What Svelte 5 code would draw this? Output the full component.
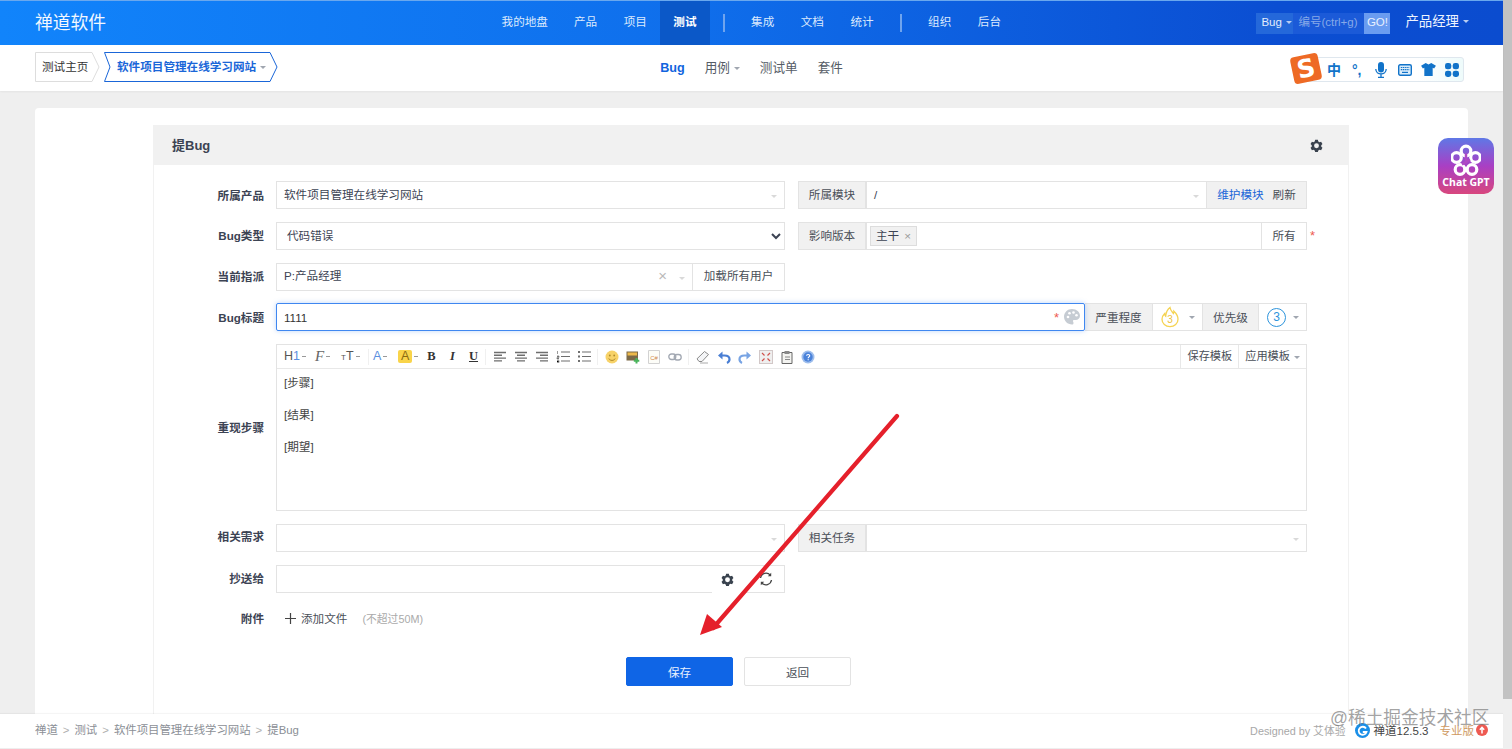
<script>
  const leftNav = ['我的地盘', '产品', '项目']
  const midNav = ['集成', '文档', '统计']
  const rightNav = ['组织', '后台']
  const crumbs = ['禅道', '测试', '软件项目管理在线学习网站', '提Bug']
</script>

{#snippet gear(size)}
  <svg class="gear" width={size} height={size} viewBox="0 0 24 24">
    <path fill="#39424e" fill-rule="evenodd" d="M9.500 1.500h5l.8 3 2.200 1.300 3-.8 2.500 4.300-2.200 2.200v2.600l2.200 2.200-2.500 4.300-3-.8-2.200 1.300-.8 3h-5l-.8-3-2.200-1.300-3 .8L1 16.300l2.200-2.200v-2.600L1 9.300 3.500 5l3 .8 2.200-1.300zM12 8a4.500 4.500 0 1 0 0 9 4.500 4.500 0 0 0 0-9z"/>
  </svg>
{/snippet}

<div class="window">
  <div class="page">
    <header class="topbar">
      <div class="logo">禅道软件</div>
      <nav class="mainnav">
        {#each leftNav as item}<a class="navitem">{item}</a>{/each}
        <a class="navitem active">测试</a>
        <i class="navsep"></i>
        {#each midNav as item}<a class="navitem">{item}</a>{/each}
        <i class="navsep"></i>
        {#each rightNav as item}<a class="navitem">{item}</a>{/each}
      </nav>
      <div class="topright">
        <div class="search">
          <span class="search-type">Bug<i class="caret light"></i></span>
          <span class="search-input">编号(ctrl+g)</span>
          <span class="search-go">GO!</span>
        </div>
        <span class="user">产品经理<i class="caret light"></i></span>
      </div>
    </header>

    <div class="subbar">
      <div class="crumbs">
        <div class="crumb home">
          <svg class="crumb-bg" width="65" height="30" viewBox="0 0 65 30"><path d="M.5.5H57L64 15l-7 14.500H.5z" fill="#fff" stroke="#ddd"/></svg>
          <span>测试主页</span>
        </div>
        <div class="crumb current">
          <svg class="crumb-bg" width="174" height="30" viewBox="0 0 174 30"><path d="M.5.5H166L173 15l-7 14.500H.5L6 15z" fill="#fff" stroke="#1a66d8"/></svg>
          <span>软件项目管理在线学习网站<i class="caret"></i></span>
        </div>
      </div>
      <nav class="subnav">
        <a class="subitem on">Bug</a>
        <a class="subitem">用例<i class="caret"></i></a>
        <a class="subitem">测试单</a>
        <a class="subitem">套件</a>
      </nav>
    </div>

    <main class="main">
      <section class="card">
        <div class="panel">
          <div class="panel-head">
            <h2>提Bug</h2>
            {@render gear(13)}
          </div>
          <form class="form">
            <div class="row first">
              <label>所属产品</label>
              <div class="cols">
                <div class="group">
                  <div class="input grow">软件项目管理在线学习网站<i class="caret faint"></i></div>
                </div>
                <div class="group">
                  <span class="addon w68">所属模块</span>
                  <div class="input grow">/<i class="caret faint"></i></div>
                  <span class="addon maintain"><a>维护模块</a><b>刷新</b></span>
                </div>
              </div>
            </div>

            <div class="row">
              <label>Bug类型</label>
              <div class="cols">
                <select class="native"><option>代码错误</option></select>
                <div class="group">
                  <span class="addon w68">影响版本</span>
                  <div class="input grow chips"><span class="chip">主干<em>×</em></span></div>
                  <span class="addon white w45">所有</span>
                  <span class="star outside">*</span>
                </div>
              </div>
            </div>

            <div class="row">
              <label>当前指派</label>
              <div class="cols">
                <div class="group tight-line">
                  <div class="input grow">P:产品经理<span class="clear">×</span><i class="caret faint"></i></div>
                  <span class="addon white w92">加载所有用户</span>
                </div>
              </div>
            </div>

            <div class="row title-row">
              <label>Bug标题</label>
              <div class="group">
                <div class="input grow focus">
                  <span class="titletext">1111</span>
                  <span class="star">*</span>
                  <svg class="palette" width="18" height="18" viewBox="0 0 18 18">
                    <path fill="#c6ccd3" fill-rule="evenodd" d="M9 1c4.600 0 8 3 8 6.800 0 2.700-2 4.200-4.300 4.200h-1.500c-.8 0-1.300.5-1.300 1.100 0 .7.600 1 .6 1.800 0 .9-.6 1.600-1.500 1.600C4.600 16.500 1 13.100 1 8.800 1 4.500 4.500 1 9 1z"/>
                    <circle cx="5" cy="9" r="1.300" fill="#fff"/><circle cx="6.500" cy="5.300" r="1.300" fill="#fff"/><circle cx="10.500" cy="4.500" r="1.300" fill="#fff"/><circle cx="13.500" cy="7.300" r="1.300" fill="#fff"/>
                  </svg>
                </div>
                <span class="addon w68">严重程度</span>
                <span class="picker w50">
                  <svg width="20" height="22" viewBox="0 0 20 22">
                    <path fill="none" stroke="#f5d352" stroke-width="1.300" d="M10 1.500c.6 3.300 2.200 4.200 3.500 6 .4-.8.500-1.500.4-2.300 2.500 2.300 4.100 5 4.100 8 0 4.400-3.500 7.500-8 7.500s-8-3.100-8-7.500c0-2.600 1.300-4.300 2.700-5.700 0 1.200.3 2 1 2.700C6.100 6.500 7.500 3.300 10 1.500z"/>
                    <text x="10" y="17" text-anchor="middle" class="fire-num">3</text>
                  </svg>
                  <i class="caret"></i>
                </span>
                <span class="addon w56">优先级</span>
                <span class="picker w48">
                  <span class="pri">3</span>
                  <i class="caret"></i>
                </span>
              </div>
            </div>

            <div class="row editor-row">
              <label>重现步骤</label>
              <div class="editor">
                <div class="toolbar">
                  <span class="tool h1">H<span class="blue">1</span><i class="mini"></i></span>
                  <span class="tool ff"><span class="scriptf">F</span><i class="mini"></i></span>
                  <span class="tool tt"><small>T</small>T<i class="mini"></i></span>
                  <i class="tsep"></i>
                  <span class="tool mid"><span class="blue">A</span><i class="mini"></i></span>
                  <span class="tool mid second"><span class="hl">A</span><i class="mini"></i></span>
                  <span class="tool fmt bold">B</span>
                  <span class="tool fmt ital">I</span>
                  <span class="tool fmt under">U</span>
                  <i class="tsep tight"></i>
                  <span class="tool">
                    <svg width="14" height="12" viewBox="0 0 14 12"><path stroke="#6e6e6e" stroke-width="1.400" d="M1 1.500h12M1 4.300h8M1 7.100h12M1 9.900h8"/></svg>
                  </span>
                  <span class="tool">
                    <svg width="14" height="12" viewBox="0 0 14 12"><path stroke="#6e6e6e" stroke-width="1.400" d="M1 1.500h12M3 4.300h8M1 7.100h12M3 9.900h8"/></svg>
                  </span>
                  <span class="tool">
                    <svg width="14" height="12" viewBox="0 0 14 12"><path stroke="#6e6e6e" stroke-width="1.400" d="M1 1.500h12M5 4.300h8M1 7.100h12M5 9.900h8"/></svg>
                  </span>
                  <span class="tool">
                    <svg width="14" height="13" viewBox="0 0 14 13"><path stroke="#6e6e6e" stroke-width="1.200" d="M5 2h9M5 6.500h9M5 11h9"/><path stroke="#999" d="M1.500 1v3M1 6h2v1.500H1V9h2M1 10.500h2V12.500H1"/></svg>
                  </span>
                  <span class="tool">
                    <svg width="14" height="13" viewBox="0 0 14 13"><path stroke="#6e6e6e" stroke-width="1.200" d="M5 2h9M5 6.500h9M5 11h9"/><path fill="#6e6e6e" d="M1 1h2v2H1zM1 5.500h2v2H1zM1 10h2v2H1z"/></svg>
                  </span>
                  <i class="tsep"></i>
                  <span class="tool">
                    <svg width="14" height="14" viewBox="0 0 14 14"><circle cx="7" cy="7" r="6.500" fill="#f7d268"/><circle cx="4.800" cy="5.500" r=".9" fill="#b08a2a"/><circle cx="9.200" cy="5.500" r=".9" fill="#b08a2a"/><path d="M3.800 8.500c1 2.500 5.400 2.500 6.400 0" stroke="#b08a2a" fill="none"/></svg>
                  </span>
                  <span class="tool">
                    <svg width="14" height="14" viewBox="0 0 14 14"><rect x=".5" y="1.500" width="11.500" height="9" fill="#7c6a48"/><rect x="1.500" y="2.500" width="9.500" height="3" fill="#eeb94a"/><path d="M10.500 8v5.500M7.800 10.800h5.500" stroke="#4ab45c" stroke-width="2"/></svg>
                  </span>
                  <span class="tool">
                    <svg width="14" height="14" viewBox="0 0 14 14"><path d="M1.500.5h11v13h-11z" fill="#fdfdf8" stroke="#d2d2d2"/><text x="7" y="9.500" text-anchor="middle" class="codeglyph">C#</text></svg>
                  </span>
                  <span class="tool">
                    <svg width="14" height="10" viewBox="0 0 14 10"><rect x=".8" y="2" width="7" height="5.500" rx="2.700" fill="none" stroke="#a2a8b2" stroke-width="1.300"/><rect x="6.200" y="2.500" width="7" height="5.500" rx="2.700" fill="none" stroke="#a2a8b2" stroke-width="1.300"/></svg>
                  </span>
                  <i class="tsep"></i>
                  <span class="tool">
                    <svg width="14" height="14" viewBox="0 0 14 14"><path d="M8.500 1.500l4 3-6.500 7H3L1 8.800z" fill="#f4f5f7" stroke="#8a8a8a"/><path d="M4 13h8" stroke="#aaa"/></svg>
                  </span>
                  <span class="tool">
                    <svg width="14" height="14" viewBox="0 0 14 14"><path d="M4 5.500h3.500c3.500 0 5 1.800 5 3.800 0 1.600-1 3-2.500 3.700" fill="none" stroke="#4a7fd4" stroke-width="2.200"/><path d="M5.500 1.500v8L1 5.500z" fill="#4a7fd4"/></svg>
                  </span>
                  <span class="tool">
                    <svg width="14" height="14" viewBox="0 0 14 14"><path d="M10 5.500H6.500c-3.500 0-5 1.800-5 3.800 0 1.600 1 3 2.500 3.700" fill="none" stroke="#78a4e4" stroke-width="2.200"/><path d="M8.500 1.500v8L13 5.500z" fill="#78a4e4"/></svg>
                  </span>
                  <span class="tool">
                    <svg width="14" height="14" viewBox="0 0 14 14"><rect x=".5" y=".5" width="13" height="13" fill="#efefef" stroke="#d2c8c8"/><path d="M3 3l2.500 2.500M11 3L8.500 5.500M3 11l2.500-2.500M11 11L8.500 8.500" stroke="#d0504a" stroke-width="1.200"/></svg>
                  </span>
                  <span class="tool">
                    <svg width="14" height="14" viewBox="0 0 14 14"><path d="M2 2.500h10v11H2z" fill="#f3f3f0" stroke="#666"/><path d="M4.500 1h5v3h-5z" fill="#888"/><path d="M5 7h5M5 9.500h5" stroke="#888"/></svg>
                  </span>
                  <span class="tool">
                    <svg width="14" height="14" viewBox="0 0 14 14"><circle cx="7" cy="7" r="6.500" fill="#9dbdec"/><circle cx="7" cy="7" r="4.700" fill="#4a82da"/><path d="M5.500 5.600c.3-1.500 3.200-1.500 3.200.2 0 1.100-1.500 1.100-1.500 2.400M7.200 9.300v1" stroke="#fff" fill="none" stroke-width="1.200"/></svg>
                  </span>
                  <div class="tpl">
                    <span class="tplbtn">保存模板</span>
                    <span class="tplbtn">应用模板<i class="caret"></i></span>
                  </div>
                </div>
                <div class="editbody">
                  <p>[步骤]</p>
                  <p>[结果]</p>
                  <p>[期望]</p>
                </div>
              </div>
            </div>

            <div class="row">
              <label class="raised">相关需求</label>
              <div class="cols">
                <div class="group"><div class="input grow"><i class="caret faint"></i></div></div>
                <div class="group">
                  <span class="addon w68">相关任务</span>
                  <div class="input grow"><i class="caret faint"></i></div>
                </div>
              </div>
            </div>

            <div class="row">
              <label>抄送给</label>
              <div class="cols">
                <div class="group">
                  <div class="input grow noright"></div>
                  <span class="iconbtn">{@render gear(13)}</span>
                  <span class="iconbtn refresh">
                    <svg width="16" height="16" viewBox="0 0 16 16"><path d="M2.500 7a5.600 5.600 0 0 1 9.800-2.800M13.500 9a5.600 5.600 0 0 1-9.800 2.800" fill="none" stroke="#444" stroke-width="1.300"/><path d="M13.200 1.800v3.400H9.800zM2.800 14.200v-3.400h3.400z" fill="#444"/></svg>
                  </span>
                </div>
              </div>
            </div>

            <div class="row attach">
              <label>附件</label>
              <div class="attach-line">
                <svg width="11" height="11" viewBox="0 0 11 11"><path d="M5.500 0v11M0 5.500h11" stroke="#444" stroke-width="1.200"/></svg>
                <span>添加文件</span>
                <em>(不超过50M)</em>
              </div>
            </div>

            <div class="actions">
              <button type="button" class="btn primary">保存</button>
              <button type="button" class="btn">返回</button>
            </div>
          </form>
        </div>
      </section>
    </main>

    <footer class="footer">
      <div class="trail">
        {#each crumbs as c, i}
          {#if i > 0}<span class="gt">&gt;</span>{/if}<span>{c}</span>
        {/each}
      </div>
      <div class="powered">
        <span class="design">Designed by 艾体验</span>
        <svg width="15" height="15" viewBox="0 0 15 15"><circle cx="7.500" cy="7.500" r="7.500" fill="#1a8fe8"/><path d="M11 5.500A4 4 0 1 0 11.500 9H7.800" fill="none" stroke="#fff" stroke-width="1.800"/></svg>
        <span class="ver">禅道12.5.3</span>
        <span class="pro">专业版</span>
        <svg width="12" height="12" viewBox="0 0 12 12"><circle cx="6" cy="6" r="6" fill="#ee5a52"/><path d="M6 9.500V4M3.800 5.800L6 3.300l2.200 2.500" fill="none" stroke="#fff" stroke-width="1.500"/></svg>
      </div>
    </footer>

    <div class="sogou">
      <span class="sg-logo"><b>S</b></span>
      <span class="sg-zh">中</span>
      <span class="sg-punct">°,</span>
      <svg class="sg-mic" width="12" height="16" viewBox="0 0 12 16"><rect x="3" y="0" width="6" height="10.500" rx="3" fill="#1173c9"/><path d="M.8 7c0 6.500 10.400 6.500 10.400 0M6 12.500v2.500M3 15.400h6" fill="none" stroke="#1173c9" stroke-width="1.300"/></svg>
      <svg class="sg-kb" width="14" height="12" viewBox="0 0 14 12"><rect x=".7" y=".7" width="12.600" height="10.600" rx="1.500" fill="#d9ecfa" stroke="#1173c9" stroke-width="1.400"/><path d="M2.800 3.500h8.400M2.800 5.700h8.400" stroke="#1173c9" stroke-width="1.200" stroke-dasharray="1.300 .6"/><path d="M4 8.400h6" stroke="#1173c9" stroke-width="1.200"/></svg>
      <svg width="15" height="13" viewBox="0 0 16 14"><path d="M5 0l3 1.500L11 0l5 3-2 3-1.500-.8V14h-9V5.200L2 6 0 3z" fill="#1173c9"/></svg>
      <svg width="14" height="14" viewBox="0 0 14 14"><rect width="6.300" height="6.300" rx="2.400" fill="#1173c9"/><rect x="7.700" width="6.300" height="6.300" rx="2.400" fill="#1173c9"/><rect y="7.700" width="6.300" height="6.300" rx="2.400" fill="#1173c9"/><rect x="7.700" y="7.700" width="6.300" height="6.300" rx="2.400" fill="#1173c9"/></svg>
    </div>

    <div class="gptbadge">
      <svg width="30" height="33" viewBox="0 0 30 32">
        <g fill="none" stroke="#fff" stroke-width="3.200">
          <circle cx="15" cy="6.500" r="4.800"/>
          <circle cx="24.500" cy="13" r="4.800"/>
          <circle cx="21" cy="25" r="4.800"/>
          <circle cx="9" cy="25" r="4.800"/>
          <circle cx="5.500" cy="13" r="4.800"/>
        </g>
        <path d="M15 9v10M11 20l8-5" fill="none" stroke="#b04ac4" stroke-width="2.500"/>
      </svg>
      <span>Chat GPT</span>
    </div>

    <div class="watermark">@稀土掘金技术社区</div>

    <svg class="arrow" width="220" height="240" viewBox="0 0 220 240">
      <path d="M198 6 L14 218" stroke="#e5202b" stroke-width="4.200" stroke-linecap="round" fill="none"/>
      <path d="M1 225 L8 204 L23 217z" fill="#e5202b"/>
    </svg>
  </div>
  <div class="scrollbar"><span class="thumb"></span></div>
</div>

<style>
  :global(body) {
    background: #efefef;
    font-family: "Liberation Sans", "Noto Sans CJK SC", sans-serif;
    font-size: 11.6px;
    color: #3c4353;
  }
  .window {
    display: flex;
    height: 749px;
    overflow: hidden;
  }
  .page {
    position: relative;
    flex: 1;
    min-width: 0;
    display: flex;
    flex-direction: column;
    background: #efefef;
  }
  .scrollbar {
    width: 9px;
    background: #efefef;
  }
  .thumb {
    display: block;
    height: 699px;
    background: #c2c2c2;
  }

  /* 顶部导航 */
  .topbar {
    height: 44px;
    border-top: 1px solid #6aa8ee;
    display: grid;
    grid-template-columns: 1fr auto 1fr;
    align-items: stretch;
    padding: 0 35px;
    background: linear-gradient(90deg, #1184fb 0%, #0f6fec 45%, #0b4ed2 85%, #0b4ccf 100%);
    color: #fff;
  }
  .logo {
    font-size: 17.8px;
    line-height: 45px;
    color: #f2f8ff;
  }
  .mainnav {
    display: flex;
    align-items: stretch;
  }
  .navitem {
    width: 49.7px;
    text-align: center;
    line-height: 42px;
    color: #dbe9fd;
    white-space: nowrap;
  }
  .navitem:first-child {
    width: 72px;
  }
  .navitem.active {
    background: #0b58c8;
    color: #fff;
    font-weight: bold;
  }
  .navsep {
    width: 28px;
    position: relative;
  }
  .navsep::after {
    content: '';
    position: absolute;
    left: 13px;
    top: 13px;
    height: 18px;
    width: 2px;
    background: #6fa4ee;
  }
  .topright {
    display: flex;
    justify-content: flex-end;
    align-items: center;
    gap: 15px;
    margin-right: -1px;
  }
  .search {
    display: flex;
    height: 21px;
    line-height: 19px;
    font-size: 11.5px;
    margin-top: -1px;
  }
  .search-type {
    width: 37px;
    background: #2468da;
    padding-left: 5px;
    box-sizing: border-box;
    white-space: nowrap;
    color: #e3edfd;
  }
  .search-input {
    width: 71px;
    background: #1b5ad8;
    padding-left: 5px;
    box-sizing: border-box;
    color: #86a9e8;
    white-space: nowrap;
  }
  .search-go {
    width: 26px;
    background: #6a9cf0;
    text-align: center;
    color: #e8f0fe;
  }
  .user {
    font-size: 13.4px;
    line-height: 18px;
    margin-top: -4px;
    color: #eef4ff;
    white-space: nowrap;
  }
  .caret {
    display: inline-block;
    width: 0;
    height: 0;
    border-left: 3px solid transparent;
    border-right: 3px solid transparent;
    border-top: 3px solid #a0a6b0;
    margin-left: 4px;
    vertical-align: middle;
  }
  .caret.light {
    border-top-color: #b8cdf2;
  }
  .caret.faint {
    position: absolute;
    right: 7px;
    top: 13px;
    border-top-color: #d9d9d9;
  }

  /* 二级导航 */
  .subbar {
    position: relative;
    height: 46px;
    flex: none;
    background: #fff;
    display: flex;
    align-items: center;
    justify-content: center;
    box-shadow: 0 1px 2px rgba(0, 0, 0, 0.05);
    z-index: 1;
  }
  .crumbs {
    position: absolute;
    left: 35px;
    top: 7px;
    display: flex;
    gap: 4px;
  }
  .crumb {
    position: relative;
    height: 30px;
    line-height: 29px;
    white-space: nowrap;
  }
  .crumb span {
    position: relative;
  }
  .crumb-bg {
    position: absolute;
    left: 0;
    top: 0;
  }
  .crumb.home {
    width: 65px;
    padding-left: 7px;
    box-sizing: border-box;
    color: #333;
  }
  .crumb.current {
    width: 174px;
    padding-left: 13px;
    box-sizing: border-box;
    color: #1a66d8;
    font-weight: bold;
  }
  .subnav {
    display: flex;
    gap: 20px;
    font-size: 12.6px;
    line-height: 20px;
    margin-top: -1px;
  }
  .subitem {
    color: #555c66;
  }
  .subitem.on {
    color: #1164de;
    font-weight: bold;
  }

  /* 主体 */
  .main {
    flex: 1;
    min-height: 0;
    overflow: hidden;
    padding: 17px 35px 0;
  }
  .card {
    height: 100%;
    background: #fff;
    border-radius: 4px 4px 0 0;
    padding: 17px 119px 0 118px;
    box-sizing: border-box;
  }
  .panel {
    height: 100%;
    border-left: 1px solid #f1f1f1;
    border-right: 1px solid #f1f1f1;
    box-sizing: border-box;
  }
  .panel-head {
    height: 40px;
    margin: 0 -1px;
    background: #f1f1f1;
    display: flex;
    align-items: center;
    justify-content: space-between;
    padding: 0 26px 0 19px;
  }
  h2 {
    margin: 0 0 2px;
    font-size: 13px;
    font-weight: bold;
    color: #3c4353;
  }
  .gear {
    display: block;
  }
  .form {
    padding: 16px 41px 0 0;
    display: flex;
    flex-direction: column;
    gap: 13px;
  }
  .row {
    display: grid;
    grid-template-columns: 110px 1fr;
    column-gap: 12px;
    align-items: center;
  }
  .title-row {
    margin-top: -1px;
  }
  label {
    text-align: right;
    font-weight: bold;
    color: #3c4353;
    white-space: nowrap;
    margin-bottom: 2px;
  }
  label.raised {
    margin-bottom: 4px;
  }
  .first label,
  .title-row label,
  .attach label {
    margin-bottom: 0;
  }
  .cols {
    display: grid;
    grid-template-columns: 509px 509px;
    column-gap: 13px;
  }
  .group {
    position: relative;
    display: flex;
    height: 28px;
    line-height: 25px;
  }
  .group.tight-line {
    line-height: 23px;
  }
  .title-row .group {
    line-height: 27px;
  }
  .input {
    position: relative;
    border: 1px solid #e3e3e3;
    box-sizing: border-box;
    padding: 0 7px;
    background: #fff;
    color: #3c4353;
    min-width: 0;
  }
  .grow {
    flex: 1;
  }
  .noright {
    border-right: none;
  }
  .input.focus {
    border: 1.5px solid #3f87f0;
    border-radius: 2px;
    box-shadow: 0 0 5px rgba(63, 135, 240, 0.35);
    display: flex;
    align-items: center;
    z-index: 1;
  }
  .titletext {
    flex: 1;
    color: #333;
  }
  .addon {
    flex: none;
    background: #f1f1f1;
    border: 1px solid #e3e3e3;
    border-left: none;
    box-sizing: border-box;
    text-align: center;
    color: #4a4f58;
    white-space: nowrap;
  }
  .group > .addon:first-child {
    border-left: 1px solid #e3e3e3;
  }
  .addon.white {
    background: #fff;
  }
  .w45 { width: 45px; }
  .w50 { width: 50px; }
  .w48 { width: 48px; }
  .w56 { width: 56px; }
  .w68 { width: 68px; }
  .w92 { width: 92px; }
  .maintain {
    width: 100px;
    display: flex;
    justify-content: center;
    gap: 9px;
  }
  .maintain a {
    color: #1a66d8;
  }
  .maintain b {
    font-weight: normal;
  }
  .native {
    height: 28px;
    width: 100%;
    border: 1px solid #e3e3e3;
    background: #fff;
    padding: 0 0 2px 6px;
    font: inherit;
    color: #3c4353;
  }
  .chips {
    padding: 3px;
    line-height: 18px;
  }
  .chip {
    display: inline-block;
    height: 20px;
    width: 47px;
    box-sizing: border-box;
    background: #f1f1f1;
    border: 1px solid #ddd;
    padding-left: 5px;
    color: #3c4353;
  }
  .chip em {
    font-style: normal;
    color: #999;
    margin-left: 5px;
  }
  .star {
    color: #ee5a52;
    font-size: 13px;
    margin-right: 3px;
  }
  .star.outside {
    position: absolute;
    right: -11px;
    top: 1px;
  }
  .clear {
    position: absolute;
    right: 25px;
    top: 0;
    font-size: 15px;
    color: #b9b9b9;
  }
  .palette {
    margin-right: -4px;
    margin-left: 1px;
  }
  .picker {
    flex: none;
    border: 1px solid #e3e3e3;
    border-left: none;
    box-sizing: border-box;
    display: flex;
    align-items: center;
    justify-content: space-between;
    padding: 0 7px 0 7px;
    background: #fff;
  }
  .picker.w48 {
    padding-left: 8px;
  }
  .picker .caret {
    margin: 0;
  }
  .fire-num {
    font-size: 10px;
    fill: #eec23a;
  }
  .pri {
    width: 19px;
    height: 19px;
    box-sizing: border-box;
    border: 1.5px solid #2d94dc;
    border-radius: 50%;
    color: #2d94dc;
    text-align: center;
    line-height: 16px;
    font-size: 12px;
  }

  /* 编辑器 */
  .editor {
    height: 167px;
    border: 1px solid #e3e3e3;
    box-sizing: border-box;
    display: flex;
    flex-direction: column;
  }
  .toolbar {
    height: 23px;
    flex: none;
    display: flex;
    align-items: center;
    padding-left: 7px;
    border-bottom: 1px solid #e8e8e8;
    background: #fff;
    color: #555;
  }
  .tool {
    width: 21px;
    flex: none;
    display: flex;
    align-items: center;
    justify-content: center;
    font-size: 12.5px;
    line-height: 1;
    white-space: nowrap;
  }
  .h1, .ff, .tt, .mid {
    justify-content: flex-start;
  }
  .h1 { width: 31px; }
  .ff { width: 26px; }
  .tt { width: 24px; }
  .mid {
    width: 24px;
    margin-left: 1px;
  }
  .mid.second {
    width: 23px;
  }
  .tool small {
    font-size: 8px;
    margin-top: 3px;
  }
  .scriptf {
    font-family: "Liberation Serif", serif;
    font-style: italic;
    font-size: 15px;
    color: #666;
  }
  .blue {
    color: #5a8fe0;
  }
  .hl {
    background: #f9d44a;
    color: #8a6a10;
    padding: 0 3px;
    line-height: 13px;
    border-radius: 2px;
  }
  .fmt {
    font-family: "Liberation Serif", serif;
    font-weight: bold;
    font-size: 12.5px;
    color: #333;
  }
  .ital {
    font-style: italic;
  }
  .under {
    text-decoration: underline;
  }
  .mini {
    display: inline-block;
    width: 4px;
    height: 1px;
    background: #999;
    margin-left: 2px;
  }
  .tsep {
    width: 1px;
    height: 16px;
    background: #f0f0f0;
    margin: 0 3px;
    flex: none;
  }
  .tsep.tight {
    margin-left: 1px;
  }
  .codeglyph {
    font-size: 6px;
    fill: #d08a4a;
  }
  .tpl {
    margin-left: auto;
    display: flex;
    height: 100%;
  }
  .tplbtn {
    border-left: 1px solid #e8e8e8;
    line-height: 22px;
    padding: 0 6px;
    font-size: 11.2px;
    color: #4a4f58;
    white-space: nowrap;
  }
  .editbody {
    flex: 1;
    padding: 5px 7px;
    color: #444;
  }
  .editbody p {
    margin: 0 0 15px;
    line-height: 17px;
  }

  .iconbtn {
    flex: none;
    width: 31px;
    display: flex;
    align-items: center;
    justify-content: center;
    border-top: 1px solid #e3e3e3;
    box-sizing: border-box;
  }
  .iconbtn.refresh {
    width: 42px;
    border: 1px solid #e3e3e3;
    border-left: none;
    padding-left: 15px;
    justify-content: flex-start;
  }
  .attach {
    height: 26px;
    margin-top: -1px;
  }
  .attach-line {
    display: flex;
    align-items: center;
    padding-left: 9px;
    color: #4a4f58;
  }
  .attach-line svg {
    margin-right: 5px;
  }
  .attach-line em {
    font-style: normal;
    font-size: 10.8px;
    color: #aaa;
    margin-left: 15px;
  }
  .actions {
    display: flex;
    gap: 11px;
    padding-left: 472px;
    margin-top: 13px;
  }
  .btn {
    width: 107px;
    height: 29px;
    border: 1px solid #e3e3e3;
    border-radius: 2px;
    background: #fff;
    font: inherit;
    color: #4a4f58;
  }
  .btn.primary {
    background: #0f65e6;
    border-color: #0f65e6;
    color: #e8f0fe;
  }

  /* 页脚 */
  .footer {
    height: 35px;
    flex: none;
    background: #fff;
    display: flex;
    align-items: center;
    justify-content: space-between;
    padding: 0 15px 2px 35px;
    box-shadow: 0 -1px 1px rgba(0, 0, 0, 0.04);
    border-bottom: 1px solid #eee;
    box-sizing: border-box;
    position: relative;
    z-index: 1;
    color: #8b8f96;
    font-size: 11.4px;
  }
  .trail {
    display: flex;
    gap: 5px;
    line-height: 16px;
  }
  .gt {
    color: #b0b0b0;
  }
  .powered {
    display: flex;
    align-items: center;
    font-size: 10.8px;
  }
  .design {
    color: #a8a8a8;
    margin-right: 9px;
  }
  .ver {
    color: #444;
    font-size: 11.5px;
    margin: 0 11px 0 4px;
  }
  .pro {
    color: #cf9a62;
    font-size: 11.5px;
    margin-right: 2px;
  }

  /* 浮层 */
  .sogou {
    position: absolute;
    left: 1306px;
    top: 57px;
    width: 158px;
    height: 25px;
    background: linear-gradient(90deg, #fff 70%, #eefbfb);
    border: 1px solid #dfe7ee;
    border-radius: 3px;
    display: flex;
    align-items: center;
    gap: 9px;
    padding-left: 20px;
    box-sizing: border-box;
    z-index: 2;
  }
  .sg-logo {
    position: absolute;
    left: -15px;
    top: -3px;
    width: 28px;
    height: 27px;
    background: #ee6a25;
    border-radius: 4px;
    transform: rotate(-12deg);
    display: flex;
    align-items: center;
    justify-content: center;
    color: #fff;
    font-family: "DejaVu Sans", sans-serif;
    font-size: 25px;
    line-height: 1;
  }
  .sg-zh {
    color: #1173c9;
    font-size: 14px;
    font-weight: bold;
    line-height: 1;
  }
  .sg-punct {
    color: #1173c9;
    font-size: 14px;
    font-weight: bold;
    width: 11px;
    margin-left: 2px;
    line-height: 1;
  }
  .sg-mic {
    margin-left: 3px;
  }
  .sg-kb {
    margin-left: 2px;
  }
  .gptbadge {
    position: absolute;
    left: 1438px;
    top: 138px;
    width: 56px;
    height: 56px;
    border-radius: 10px;
    background: linear-gradient(180deg, #5f78e6 0%, #a93fc4 50%, #d8477e 100%);
    display: flex;
    flex-direction: column;
    align-items: center;
    padding-top: 6px;
    color: #fff;
    font-family: "Noto Sans", sans-serif;
    font-weight: bold;
    font-size: 10.5px;
    line-height: 12px;
    box-sizing: border-box;
    z-index: 2;
    white-space: nowrap;
  }
  .gptbadge svg {
    margin-bottom: -1px;
  }
  .watermark {
    position: absolute;
    left: 1330px;
    top: 703px;
    font-size: 17.7px;
    color: rgba(110, 110, 110, 0.65);
    z-index: 3;
    white-space: nowrap;
  }
  .arrow {
    position: absolute;
    left: 699px;
    top: 410px;
    z-index: 3;
    pointer-events: none;
  }
</style>
